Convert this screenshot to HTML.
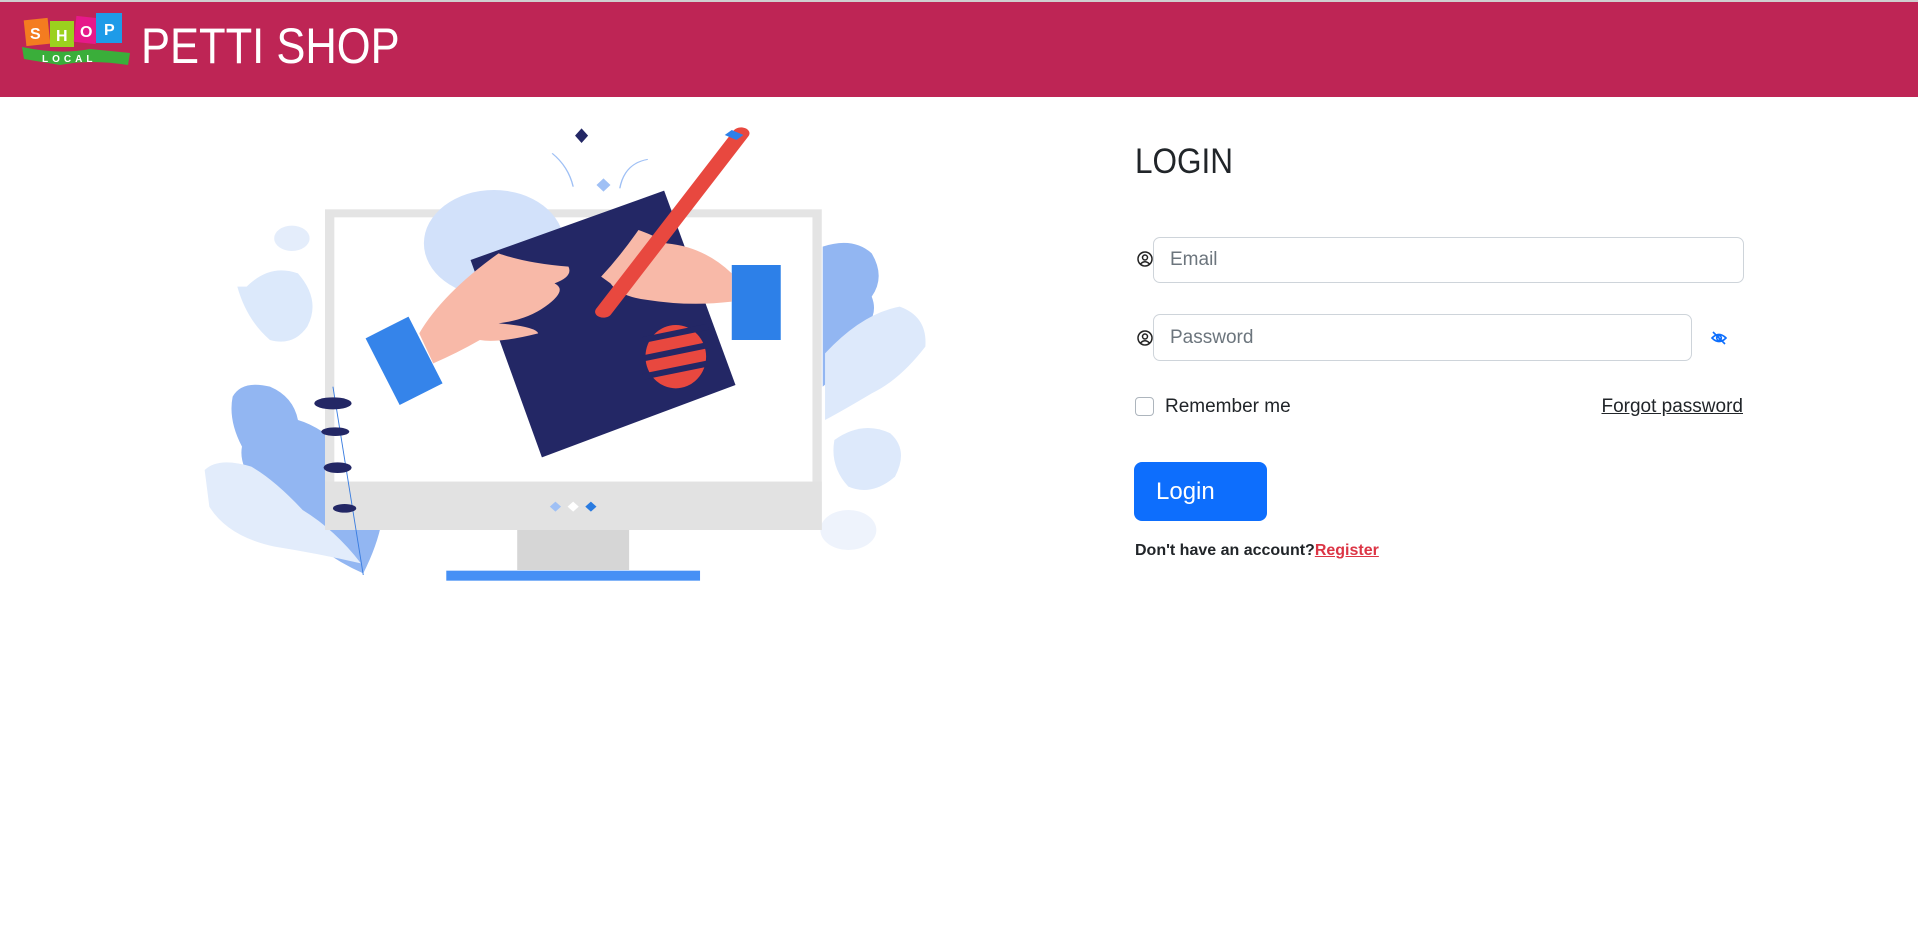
<!DOCTYPE html>
<html><head><meta charset="utf-8"><style>
*{box-sizing:border-box;margin:0;padding:0}
body{width:1918px;height:925px;background:#fff;font-family:"Liberation Sans",sans-serif;position:relative;overflow:hidden;color:#212529}
.hdr{position:absolute;left:0;top:0;width:1918px;height:97px;background:#be2555;border-top:2px solid #cfcfcf}
.title{position:absolute;left:141px;top:16px;color:#fff;font-size:50px;line-height:56px;transform:scaleX(0.87);transform-origin:left}
.abs{position:absolute}
.inp{position:absolute;border:1px solid #ced4da;border-radius:7px;background:#fff;color:#6c757d;font-size:19px;padding-left:16px;display:flex;align-items:center}
</style></head><body>
<div class="hdr">
<svg class="abs" style="left:20px;top:3px" width="110" height="60" viewBox="0 0 110 60">
<path d="M2 42 Q40 50 70 44 L110 48 L108 60 Q70 54 40 60 L4 54 Z" fill="#3aae3a"/>
<rect x="5" y="14" width="24" height="26" fill="#f47c20" transform="rotate(-6 17 27)"/>
<rect x="30" y="16" width="24" height="26" fill="#9bd11e"/>
<rect x="55" y="12" width="22" height="26" fill="#e6198a" transform="rotate(6 66 25)"/>
<rect x="76" y="8" width="26" height="30" fill="#1e9be8"/>
<text x="10" y="34" fill="#fff" font-size="16" font-weight="bold" font-family="Liberation Sans">S</text>
<text x="36" y="36" fill="#fff" font-size="16" font-weight="bold" font-family="Liberation Sans">H</text>
<text x="60" y="32" fill="#fff" font-size="16" font-weight="bold" font-family="Liberation Sans">O</text>
<text x="84" y="30" fill="#fff" font-size="16" font-weight="bold" font-family="Liberation Sans">P</text>
<text x="22" y="57" fill="#fff" font-size="10" font-weight="bold" font-family="Liberation Sans" letter-spacing="4">LOCAL</text>
</svg>
<div class="title">PETTI SHOP</div>
</div>

<svg class="abs" style="left:200px;top:120px" width="730" height="470" viewBox="0 0 1565 1410" preserveAspectRatio="none">
<path d="M70 830 Q90 780 150 800 Q200 830 210 900 Q260 920 320 1000 Q390 1050 395 1150 Q390 1250 350 1360 Q250 1300 150 1150 Q80 1050 90 980 Q60 900 70 830Z" fill="#92b6f2"/>
<path d="M10 1050 Q40 1010 110 1040 Q160 1080 220 1170 Q290 1230 345 1330 Q250 1300 160 1280 Q60 1250 20 1160 Z" fill="#e2ecfb"/>
<path d="M100 500 Q150 430 210 460 Q260 540 230 620 Q200 680 150 660 Q100 600 80 500Z" fill="#dce9fb"/>
<circle cx="197" cy="355" r="38" fill="#e4edfb"/>
<path d="M1335 380 Q1400 350 1440 400 Q1470 470 1440 530 Q1460 600 1400 650 Q1380 750 1335 800 Z" fill="#92b6f2"/>
<path d="M1340 700 Q1420 580 1500 560 Q1560 590 1555 680 Q1500 780 1440 820 Q1380 870 1340 900Z" fill="#dde9fb"/>
<path d="M1360 960 Q1420 900 1480 940 Q1520 990 1490 1070 Q1440 1130 1390 1100 Q1350 1040 1360 960Z" fill="#dde9fb"/>
<circle cx="1390" cy="1230" r="60" fill="#eef3fc"/>
<rect x="268" y="268" width="1065" height="962" fill="#e4e4e4"/>
<rect x="288" y="292" width="1025" height="793" fill="#fff"/>
<rect x="268" y="1085" width="1065" height="145" fill="#e2e2e2"/>
<rect x="680" y="1230" width="240" height="120" fill="#d6d6d6"/>
<rect x="528" y="1352" width="544" height="30" fill="#4690f5"/>
<path d="M762 1145 L774 1160 L762 1175 L750 1160Z" fill="#9fc0f5"/><path d="M800 1145 L812 1160 L800 1175 L788 1160Z" fill="#fff"/><path d="M838 1145 L850 1160 L838 1175 L826 1160Z" fill="#2a7be0"/>
<ellipse cx="630" cy="370" rx="150" ry="160" fill="#d2e1fa"/>
<path d="M580 420 L995 212 L1148 795 L733 1012Z" fill="#232765"/>
<ellipse cx="1020" cy="710" rx="65" ry="95" fill="#e8483f"/>
<path d="M950 660 L1090 620 M950 715 L1090 675 M950 770 L1090 730" stroke="#232765" stroke-width="18"/>
<path d="M355 655 L447 590 L520 790 L428 855Z" fill="#3584ea"/>
<rect x="1140" y="435" width="105" height="225" fill="#2d80e8"/>
<path d="M470 640 Q520 520 640 400 Q700 430 790 440 Q800 470 760 490 Q790 510 740 560 Q700 600 640 610 Q720 620 725 640 Q640 670 600 660 Q550 700 500 730Z" fill="#f8b9a8"/>
<path d="M860 470 Q900 410 940 330 Q980 350 1000 370 Q1080 380 1140 460 L1140 545 Q1050 560 960 540 Q900 530 880 490Z" fill="#f8b9a8"/>
<path d="M865 575 L1160 40" stroke="#e8483f" stroke-width="36" stroke-linecap="round"/>
<path d="M1140 30 L1165 45 L1150 60 L1125 45Z" fill="#2d80e8"/>
<path d="M818 25 L832 47 L818 69 L804 47Z" fill="#232765"/>
<path d="M865 175 L880 195 L865 215 L850 195Z" fill="#9fc0f5"/>
<path d="M755 100 Q790 140 800 200" stroke="#9fc0f5" stroke-width="3" fill="none"/>
<path d="M960 118 Q910 130 900 205" stroke="#9fc0f5" stroke-width="3" fill="none"/>
<path d="M285 800 L350 1365" stroke="#3a7de0" stroke-width="2"/>
<ellipse cx="285" cy="850" rx="40" ry="18" fill="#232765"/><ellipse cx="290" cy="935" rx="30" ry="13" fill="#232765"/><ellipse cx="295" cy="1043" rx="30" ry="16" fill="#232765"/><ellipse cx="310" cy="1165" rx="25" ry="13" fill="#232765"/>
</svg>

<div class="abs" style="left:1135px;top:140px;font-size:35px;line-height:44px;transform:scaleX(0.9);transform-origin:left">LOGIN</div>
<svg class="abs" style="left:1137px;top:251px" width="16" height="16" viewBox="0 0 16 16"><circle cx="8" cy="8" r="7" fill="none" stroke="#222" stroke-width="1.5"/><circle cx="8" cy="6.5" r="2.5" fill="none" stroke="#222" stroke-width="1.5"/><path d="M3.5 13 Q8 8.5 12.5 13" fill="none" stroke="#222" stroke-width="1.5"/></svg>
<div class="inp" style="left:1153px;top:237px;width:591px;height:46px">Email</div>
<svg class="abs" style="left:1137px;top:330px" width="16" height="16" viewBox="0 0 16 16"><circle cx="8" cy="8" r="7" fill="none" stroke="#222" stroke-width="1.5"/><circle cx="8" cy="6.5" r="2.5" fill="none" stroke="#222" stroke-width="1.5"/><path d="M3.5 13 Q8 8.5 12.5 13" fill="none" stroke="#222" stroke-width="1.5"/></svg>
<div class="inp" style="left:1153px;top:314px;width:539px;height:47px">Password</div>
<svg class="abs" style="left:1710px;top:329px" width="18" height="18" viewBox="0 0 18 18"><path d="M2 9 Q9 2 16 9 Q9 16 2 9Z" fill="none" stroke="#0d6efd" stroke-width="1.6"/><circle cx="9" cy="9" r="2.3" fill="none" stroke="#0d6efd" stroke-width="1.6"/><path d="M3 3 L15 15" stroke="#0d6efd" stroke-width="1.6"/></svg>
<div class="abs" style="left:1135px;top:397px;width:19px;height:19px;border:1px solid #adb5bd;border-radius:4px"></div>
<div class="abs" style="left:1165px;top:395px;font-size:19px;line-height:24px">Remember me</div>
<div class="abs" style="right:175px;top:395px;font-size:19px;line-height:24px;text-decoration:underline">Forgot password</div>
<div class="abs" style="left:1134px;top:462px;width:133px;height:59px;background:#0d6efd;border-radius:8px;color:#fff;font-size:24px;line-height:59px;padding-left:22px">Login</div>
<div class="abs" style="left:1135px;top:540px;font-size:16px;font-weight:bold;line-height:22px">Don't have an account?<span style="color:#dc3545;text-decoration:underline">Register</span></div>
</body></html>
